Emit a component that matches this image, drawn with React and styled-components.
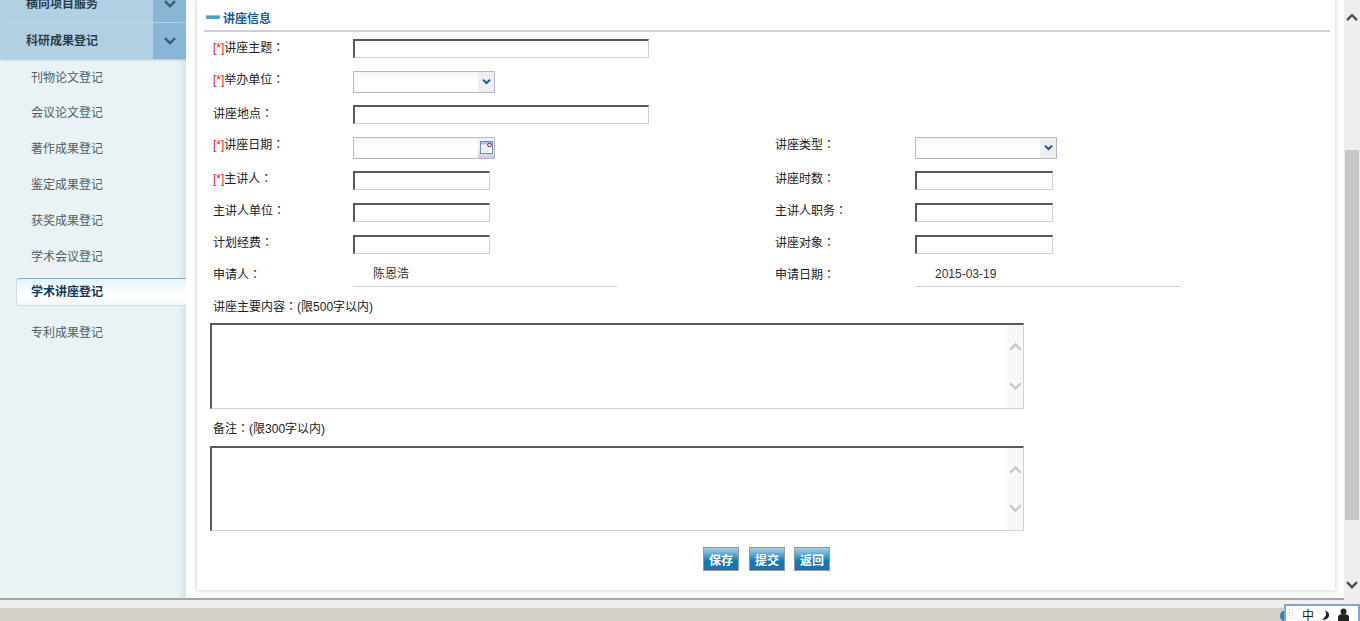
import React from "react";
import styled, { createGlobalStyle } from "styled-components";

const Global = createGlobalStyle`
  html, body { margin: 0; padding: 0; height: 621px; overflow: hidden; background: #fff; }
  body { font-family: "Liberation Sans", "Noto Sans CJK SC", sans-serif; font-size: 12px; color: #222; }
  * { box-sizing: border-box; }
`;

const Page = styled.div`
  display: flex;
  width: 1360px;
  height: 621px;
  overflow: hidden;
  position: relative;
`;
const LeftColumn = styled.div`
  flex: 1;
  display: flex;
  flex-direction: column;
  min-width: 0;
`;
const Workspace = styled.div`
  height: 600px;
  display: flex;
  border-bottom: 2px solid #a9a6a0;
  overflow: hidden;
`;
const Sidebar = styled.nav`
  width: 186px;
  flex: none;
  background: linear-gradient(90deg, #e9f3f6 0, #e9f3f6 178px, #d3e4ef 186px);
  overflow: hidden;
`;
const GroupRow = styled.div`
  height: 36px;
  margin-top: ${p => p.$offset || 0}px;
  margin-bottom: 1px;
  display: flex;
  background: #b1d0e4;
  box-shadow: 0 1px 2px rgba(70, 110, 140, .35);
`;
const GroupTitle = styled.div`
  flex: 1;
  padding-left: 26px;
  line-height: 36px;
  font-weight: 700;
  color: #2c3e4c;
`;
const GroupToggle = styled.div`
  width: 33px;
  display: flex;
  align-items: center;
  justify-content: center;
  background: #8ab6d6;
`;
const MenuList = styled.div`
  display: flex;
  flex-direction: column;
  margin-top: -1px;
`;
const MenuItem = styled.div`
  height: ${p => p.$h}px;
  padding-left: 31px;
  display: flex;
  align-items: center;
  color: #555c62;
`;
const ActiveItem = styled.div`
  height: 28px;
  margin: 5px 0 11px 16px;
  padding: 0 0 3px 14px;
  display: flex;
  align-items: center;
  font-weight: 700;
  color: #103a5c;
  border: 1px solid #c9dbe8;
  border-top-color: #7fb0d4;
  border-right: none;
  border-radius: 4px 0 0 4px;
  background: linear-gradient(180deg, #e6f2f9 0, #ffffff 60%, #f4f9fc 100%);
`;
const ContentWrap = styled.main`
  flex: 1;
  min-width: 0;
  padding: 0 9px 8px 11px;
  background: #fff;
  display: flex;
`;
const Panel = styled.section`
  flex: 1;
  min-width: 0;
  background: #fff;
  box-shadow: 0 0 4px 1px #d8d8d8;
  padding: 9px 5px 0 7px;
`;
const SectionHead = styled.h2`
  margin: 0;
  height: 23px;
  display: flex;
  align-items: center;
  gap: 3px;
  padding: 0 0 5px 2px;
  font-size: 12px;
  font-weight: 700;
  color: #1d5c94;
  border-bottom: 2px solid #cfcde2;
`;
const Dash = styled.span`
  width: 14px;
  height: 4px;
  border-radius: 1px;
  background: #4a9fcb;
  box-shadow: inset 0 1px 0 #8cc3df;
`;
const FormBody = styled.div`
  padding: 7px 0 0 9px;
`;
const Row = styled.div`
  display: grid;
  grid-template-columns: 140px 422px 140px 1fr;
  height: ${p => p.$h}px;
  margin-top: ${p => p.$lift || 0}px;
`;
const Label = styled.div`
  line-height: 16px;
  padding-top: ${p => p.$top ?? 0}px;
  color: #222;
`;
const Req = styled.span`
  color: #f01818;
`;
const Colon = styled.span`
  font-family: "Noto Sans CJK TC", sans-serif;
  line-height: 0;
`;
const TextInput = styled.input`
  display: block;
  width: ${p => p.$w}px;
  height: 19px;
  padding: 0;
  background: #fff;
  border-style: solid;
  border-color: #5a5a5a #d4d0c8 #d4d0c8 #5a5a5a;
  border-width: 2px 1px 1px 2px;
`;
const Combo = styled.div`
  width: 142px;
  height: 22px;
  display: flex;
  border: 1px solid #b5b8d0;
  background: linear-gradient(180deg, #f3f6f6 0, #fff 45%);
`;
const ComboBlank = styled.div`
  flex: 1;
`;
const ComboButton = styled.div`
  width: 16px;
  display: flex;
  align-items: center;
  justify-content: center;
  background: #efefef;
`;
const DateButton = styled(ComboButton)`
  align-items: flex-start;
  padding-top: 3px;
  background: linear-gradient(180deg, #f0f0f0 50%, #cfcfcf);
`;
const ReadValue = styled.div`
  width: ${p => p.$w}px;
  height: 21px;
  padding-left: 20px;
  line-height: 16px;
  color: #333;
  border-bottom: 1px solid #cfcde2;
`;
const BlockLabel = styled.div`
  height: ${p => p.$h}px;
  margin-top: ${p => p.$gap || 0}px;
  line-height: 16px;
  color: #222;
`;
const AreaBox = styled.div`
  width: 814px;
  height: ${p => p.$h}px;
  margin-left: -3px;
  display: flex;
  border-style: solid;
  border-width: 2px 1px 1px 2px;
  border-color: #5a5a5a #d4d0c8 #d4d0c8 #5a5a5a;
`;
const AreaInput = styled.textarea`
  flex: 1;
  border: 0;
  padding: 0;
  outline: none;
  resize: none;
  overflow: hidden;
`;
const AreaScroll = styled.div`
  width: 16px;
  display: flex;
  flex-direction: column;
  justify-content: space-between;
  align-items: center;
  padding: 17px 0;
  background: #f8f8f8;
`;
const Actions = styled.div`
  display: flex;
  gap: 9px;
  padding: 16px 0 0 490px;
`;
const ActionButton = styled.button`
  width: 36px;
  height: 24px;
  padding: 0;
  margin-right: ${p => p.$mr || 0}px;
  font: 700 12px "Noto Sans CJK SC", sans-serif;
  color: #fff;
  border: 1px solid #999;
  background: linear-gradient(180deg, #a9cde6 0, #5da6d2 30%, #0a7cb8 60%, #2a6ea8 100%);
`;
const Scrollbar = styled.aside`
  width: 16px;
  flex: none;
  height: 621px;
  background: #eee;
  display: flex;
  flex-direction: column;
  align-items: center;
`;
const ScrollUp = styled.div`
  height: 150px;
  padding-top: 13px;
`;
const ScrollThumb = styled.div`
  width: 14px;
  height: 370px;
  background: #c8c8c8;
`;
const ScrollDown = styled.div`
  padding-top: 61px;
`;
const Footer = styled.footer`
  flex: 1;
  padding-top: 8px;
  background: #eee;
`;
const FooterBar = styled.div`
  height: 13px;
  background: #d4d0c8;
`;
const ImeDot = styled.span`
  position: absolute;
  left: 1280px;
  top: 611px;
  width: 8px;
  height: 10px;
  border-radius: 50%;
  background: #3a78c8;
`;
const Ime = styled.div`
  position: absolute;
  left: 1284px;
  top: 604px;
  width: 76px;
  height: 17px;
  padding: 2px 0 0 2px;
  background: #fff;
  border: 2px solid #7ba6da;
  border-bottom: none;
  display: flex;
  align-items: center;
  color: #222;
`;
const ImeGrip = styled.span`
  width: 6px;
  height: 13px;
  margin-right: 8px;
  background-image: radial-gradient(#b8cbe4 1px, transparent 1px);
  background-size: 3px 3px;
`;
const ImeGlyph = styled.span`
  width: 12px;
  margin-right: 7px;
  font-size: 12px;
  line-height: 13px;
  font-family: "Noto Sans CJK SC", sans-serif;
`;
const ImeIcon = styled.svg`
  display: block;
  flex: none;
  margin-right: ${p => p.$mr}px;
`;

const Chevron = ({ up, size = 12, color = "#444", w = 2.4 }) => (
  <svg width={size} height={size * 0.7} viewBox="0 0 12 8" fill="none" style={{ display: "block" }}>
    <path d={up ? "M1 7L6 2l5 5" : "M1 1l5 5 5-5"} stroke={color} strokeWidth={w} />
  </svg>
);
const SelArrow = () => (
  <svg width="9" height="6" viewBox="0 0 10 7">
    <path d="M0 1.5L1.5 0 5 3l3.5-3L10 1.5 5 6.5z" fill="#2f4f8f" />
  </svg>
);
const CalIcon = () => (
  <svg width="13" height="13" viewBox="0 0 13 13">
    <rect x=".5" y=".5" width="12" height="12" fill="#fff" stroke="#6c8fb5" />
    <rect x="1" y="1" width="11" height="2.5" fill="#a9c4de" />
    <path d="M4 4v8M7 4v8M1 7h8M1 10h8" stroke="#dde4ec" />
    <circle cx="9.5" cy="4" r="1.8" fill="#fff" stroke="#8a0f1e" />
  </svg>
);

const items = [
  ["刊物论文登记", 34], ["会议论文登记", 36], ["著作成果登记", 36],
  ["鉴定成果登记", 36], ["获奖成果登记", 36], ["学术会议登记", 36],
];

const Select = () => (
  <Combo><ComboBlank /><ComboButton><SelArrow /></ComboButton></Combo>
);
const DateField = () => (
  <Combo><ComboBlank /><DateButton><CalIcon /></DateButton></Combo>
);
const AreaField = ({ h }) => (
  <AreaBox $h={h}>
    <AreaInput />
    <AreaScroll>
      <Chevron up size={13} color="#c6c6c6" w={2} />
      <Chevron size={13} color="#c6c6c6" w={2} />
    </AreaScroll>
  </AreaBox>
);

export default function App() {
  const C = <Colon>：</Colon>;
  return (
    <Page>
      <Global />
      <LeftColumn>
        <Workspace>
          <Sidebar>
            <GroupRow $offset={-14}>
              <GroupTitle>横向项目服务</GroupTitle>
              <GroupToggle><Chevron color="#3c5f78" /></GroupToggle>
            </GroupRow>
            <GroupRow>
              <GroupTitle>科研成果登记</GroupTitle>
              <GroupToggle><Chevron color="#3c5f78" /></GroupToggle>
            </GroupRow>
            <MenuList>
              {items.map(([t, h]) => <MenuItem key={t} $h={h}>{t}</MenuItem>)}
              <ActiveItem>学术讲座登记</ActiveItem>
              <MenuItem $h={28}>专利成果登记</MenuItem>
            </MenuList>
          </Sidebar>
          <ContentWrap>
            <Panel>
              <SectionHead><Dash />讲座信息</SectionHead>
              <FormBody>
                <Row $h={32}>
                  <Label $top={1}><Req>[*]</Req>讲座主题{C}</Label>
                  <TextInput $w={296} />
                </Row>
                <Row $h={34}>
                  <Label $top={1}><Req>[*]</Req>举办单位{C}</Label>
                  <Select />
                </Row>
                <Row $h={32}>
                  <Label $top={1}>讲座地点{C}</Label>
                  <TextInput $w={296} />
                </Row>
                <Row $h={34}>
                  <Label><Req>[*]</Req>讲座日期{C}</Label>
                  <DateField />
                  <Label>讲座类型{C}</Label>
                  <Select />
                </Row>
                <Row $h={32}>
                  <Label><Req>[*]</Req>主讲人{C}</Label>
                  <TextInput $w={137} />
                  <Label>讲座时数{C}</Label>
                  <TextInput $w={138} />
                </Row>
                <Row $h={32}>
                  <Label>主讲人单位{C}</Label>
                  <TextInput $w={137} />
                  <Label>主讲人职务{C}</Label>
                  <TextInput $w={138} />
                </Row>
                <Row $h={32}>
                  <Label>计划经费{C}</Label>
                  <TextInput $w={137} />
                  <Label>讲座对象{C}</Label>
                  <TextInput $w={138} />
                </Row>
                <Row $h={33} $lift={-1}>
                  <Label $top={1}>申请人{C}</Label>
                  <ReadValue $w={264}>陈恩浩</ReadValue>
                  <Label $top={1}>申请日期{C}</Label>
                  <ReadValue $w={265}>2015-03-19</ReadValue>
                </Row>
                <BlockLabel $h={24}>讲座主要内容{C}(限500字以内)</BlockLabel>
                <AreaField h={86} />
                <BlockLabel $h={25} $gap={12}>备注{C}(限300字以内)</BlockLabel>
                <AreaField h={85} />
                <Actions>
                  <ActionButton $mr={1}>保存</ActionButton>
                  <ActionButton>提交</ActionButton>
                  <ActionButton>返回</ActionButton>
                </Actions>
              </FormBody>
            </Panel>
          </ContentWrap>
        </Workspace>
        <Footer><FooterBar /></Footer>
      </LeftColumn>
      <Scrollbar>
        <ScrollUp><Chevron up color="#505050" size={12} w={2.4} /></ScrollUp>
        <ScrollThumb />
        <ScrollDown><Chevron color="#505050" size={12} w={2.4} /></ScrollDown>
      </Scrollbar>
      <ImeDot />
      <Ime>
        <ImeGrip />
        <ImeGlyph>中</ImeGlyph>
        <ImeIcon $mr={8} width="9" height="12" viewBox="0 0 10 12"><path d="M4 1c3 3 2 7-3 10 5 1 8-2 8-5S7 2 4 1z" fill="#222" /></ImeIcon>
        <ImeIcon $mr={0} width="11" height="13" viewBox="0 0 11 13"><circle cx="5.5" cy="3.5" r="3" fill="#222" /><path d="M0 13V9c0-2 2-3 5.5-3S11 7 11 9v4z" fill="#222" /></ImeIcon>
      </Ime>
    </Page>
  );
}
